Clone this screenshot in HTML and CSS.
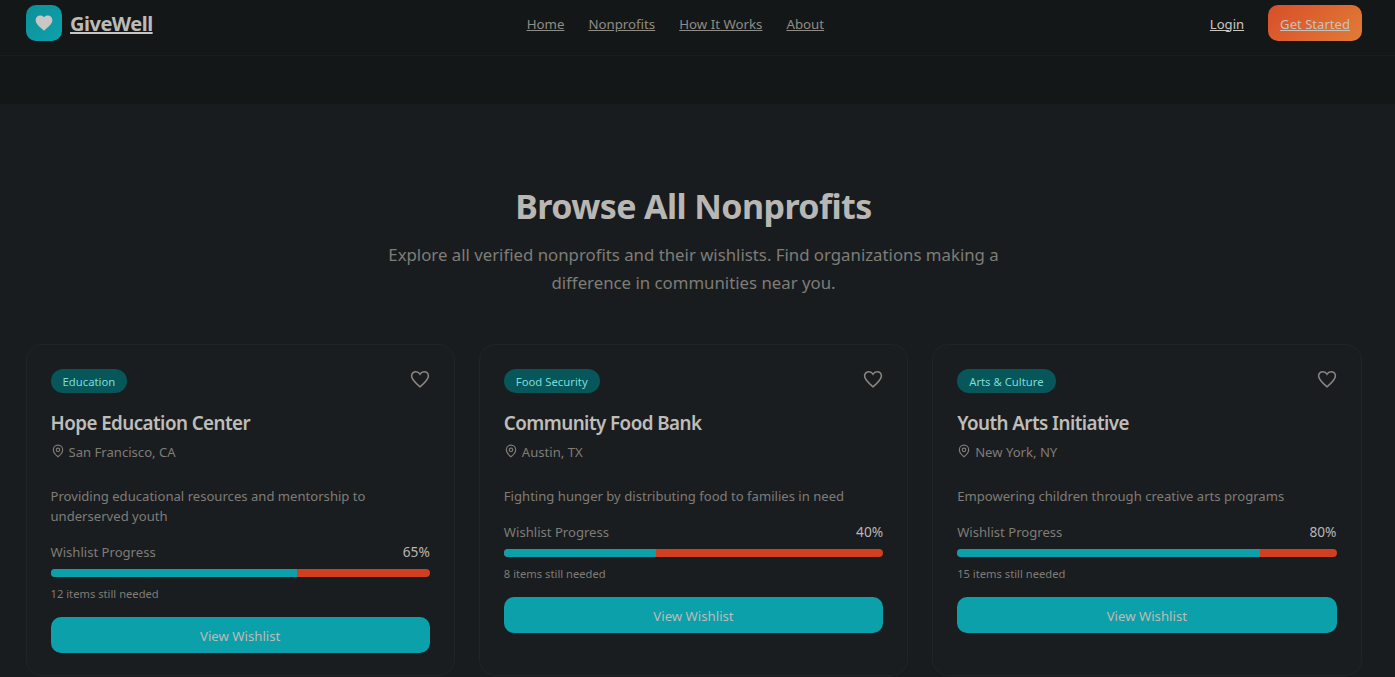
FILE: index.html
```html
<!DOCTYPE html>
<html lang="en">
<head>
<meta charset="utf-8">
<title>GiveWell</title>
<link rel="stylesheet" href="styles.css">
</head>
<body>
<header class="header">
  <a class="brand" href="#">
    <span class="logo"><svg viewBox="0 0 24 24" width="20" height="20"><path fill="#c9c7c3" d="M12 21.4C5.6 15.9 2 12.6 2 8.5 2 5.4 4.4 3 7.5 3c1.8 0 3.4.8 4.5 2.2C13.100 3.800 14.700 3 16.500 3 19.600 3 22 5.400 22 8.500c0 4.100-3.600 7.400-10 12.900z"/></svg></span>
    <span class="brand-name">GiveWell</span>
  </a>
  <nav class="nav">
    <a href="#">Home</a>
    <a href="#">Nonprofits</a>
    <a href="#">How It Works</a>
    <a href="#">About</a>
  </nav>
  <div class="actions">
    <a class="login" href="#">Login</a>
    <a class="cta" href="#">Get Started</a>
  </div>
</header>
<div class="strip"></div>
<main class="main">
  <section class="intro">
    <h1>Browse All Nonprofits</h1>
    <p>Explore all verified nonprofits and their wishlists. Find organizations making a difference in communities near you.</p>
  </section>
  <section class="grid">
    <article class="card">
      <div class="card-top">
        <span class="badge">Education</span>
        <svg class="fav" viewBox="0 0 24 24" width="22" height="22"><path d="M12 20.500C5.800 15.200 2.800 12.300 2.800 8.700 2.800 6 4.900 4 7.500 4c1.800 0 3.500 1 4.500 2.700C13 5 14.700 4 16.500 4c2.600 0 4.700 2 4.700 4.700 0 3.600-3 6.500-9.200 11.800z"/></svg>
      </div>
      <h2>Hope Education Center</h2>
      <div class="loc"><svg viewBox="0 0 24 24" width="14" height="14"><path d="M20 10c0 6-8 12-8 12s-8-6-8-12a8 8 0 0 1 16 0z"/><circle cx="12" cy="10" r="3"/></svg><span>San Francisco, CA</span></div>
      <p class="desc">Providing educational resources and mentorship to underserved youth</p>
      <div class="prog-head"><span>Wishlist Progress</span><span class="pct">65%</span></div>
      <div class="bar"><div class="fill" style="width:65%"></div></div>
      <div class="needed">12 items still needed</div>
      <a class="btn" href="#">View Wishlist</a>
    </article>
    <article class="card">
      <div class="card-top">
        <span class="badge">Food Security</span>
        <svg class="fav" viewBox="0 0 24 24" width="22" height="22"><path d="M12 20.500C5.800 15.200 2.800 12.300 2.800 8.700 2.800 6 4.900 4 7.500 4c1.800 0 3.500 1 4.500 2.700C13 5 14.700 4 16.500 4c2.600 0 4.700 2 4.700 4.700 0 3.600-3 6.500-9.200 11.800z"/></svg>
      </div>
      <h2>Community Food Bank</h2>
      <div class="loc"><svg viewBox="0 0 24 24" width="14" height="14"><path d="M20 10c0 6-8 12-8 12s-8-6-8-12a8 8 0 0 1 16 0z"/><circle cx="12" cy="10" r="3"/></svg><span>Austin, TX</span></div>
      <p class="desc">Fighting hunger by distributing food to families in need</p>
      <div class="prog-head"><span>Wishlist Progress</span><span class="pct">40%</span></div>
      <div class="bar"><div class="fill" style="width:40%"></div></div>
      <div class="needed">8 items still needed</div>
      <a class="btn" href="#">View Wishlist</a>
    </article>
    <article class="card">
      <div class="card-top">
        <span class="badge">Arts &amp; Culture</span>
        <svg class="fav" viewBox="0 0 24 24" width="22" height="22"><path d="M12 20.500C5.800 15.200 2.800 12.300 2.800 8.700 2.800 6 4.900 4 7.500 4c1.800 0 3.500 1 4.500 2.700C13 5 14.700 4 16.500 4c2.600 0 4.700 2 4.700 4.700 0 3.600-3 6.500-9.200 11.800z"/></svg>
      </div>
      <h2>Youth Arts Initiative</h2>
      <div class="loc"><svg viewBox="0 0 24 24" width="14" height="14"><path d="M20 10c0 6-8 12-8 12s-8-6-8-12a8 8 0 0 1 16 0z"/><circle cx="12" cy="10" r="3"/></svg><span>New York, NY</span></div>
      <p class="desc">Empowering children through creative arts programs</p>
      <div class="prog-head"><span>Wishlist Progress</span><span class="pct">80%</span></div>
      <div class="bar"><div class="fill" style="width:79.8%"></div></div>
      <div class="needed">15 items still needed</div>
      <a class="btn" href="#">View Wishlist</a>
    </article>
  </section>
</main>
</body>
</html>
```
FILE: styles.css
```css
* { box-sizing: border-box; }
html, body { margin: 0; height: 677px; overflow: hidden; }
body {
  background: #181c1f;
  color: #c9c7c3;
  font-family: "Noto Sans", "Open Sans", sans-serif;
}
a { color: inherit; }

.header {
  height: 56px;
  padding: 5px 33px 0 26px;
  display: flex;
  align-items: flex-start;
  background: #141718;
  border-bottom: 1px solid #191d1e;
}
.brand { display: flex; align-items: center; gap: 8px; width: max-content; }
.logo {
  width: 36px; height: 36px;
  border-radius: 10px;
  background: linear-gradient(135deg, #0d8f99, #0da2ac);
  display: flex; align-items: center; justify-content: center;
}
.brand-name { font-size: 20px; font-weight: 700; color: #bdbbb7; letter-spacing: -0.5px; }
.nav { display: flex; gap: 24px; font-size: 13.27px; color: #8f8c85; height: 36px; padding-top: 1px; align-items: center; margin-left: 374px; }
.actions { display: flex; align-items: center; gap: 24px; font-size: 13.1px; height: 36px; margin-left: auto; }
.login { color: #c9c7c3; padding-top: 1px; }
.cta {
  height: 36px; padding: 1px 12px 0;
  display: flex; align-items: center;
  border-radius: 10px;
  color: #c9c2ba;
  background: linear-gradient(135deg, #d84e2a, #e17c36);
}

.strip { height: 48px; background: #141718; }

.main { padding: 80px 33.5px 0 25.5px; }
.intro { text-align: center; margin-bottom: 47px; }
.intro h1 { margin: 0 0 13px; font-size: 34px; line-height: 44px; font-weight: 700; color: #b9b7b3; letter-spacing: -0.6px; }
.intro p { margin: 0 auto; width: 672px; font-size: 16.8px; line-height: 28px; color: #7f7c76; }

.grid { display: grid; grid-template-columns: repeat(3, 1fr); gap: 24px; }
.card {
  height: 332px;
  padding: 24px 24px 22px;
  border: 1px solid #1f2428;
  border-radius: 16px;
  background: #1a1d20;
  display: flex; flex-direction: column;
}
.card-top { display: flex; justify-content: space-between; align-items: flex-start; margin-bottom: 16px; }
.badge {
  height: 24px; padding: 0 12px;
  display: flex; align-items: center;
  border-radius: 12px;
  background: #06565a;
  color: #7cdcd8;
  font-size: 11.3px;
}
.fav { fill: none; stroke: #8a867f; stroke-width: 1.700; margin: -1px -1px 0 0; }
.card h2 { margin: 0 0 5px; font-size: 18.8px; line-height: 28px; font-weight: 600; color: #bfbdb9; letter-spacing: -0.55px; }
.loc { display: flex; align-items: center; gap: 4px; font-size: 13.1px; line-height: 20px; color: #7f7c76; margin-bottom: 24px; }
.loc svg { fill: none; stroke: #7f7c76; stroke-width: 2; margin-top: -3px; }
.desc { margin: 0 0 16px; font-size: 13.1px; line-height: 20px; color: #7f7c76; }
.prog-head { display: flex; justify-content: space-between; font-size: 13.1px; line-height: 20px; color: #7f7c76; margin-bottom: 7px; }
.pct { color: #b9b7b3; font-size: 13.7px; }
.bar { height: 8px; border-radius: 4px; background: #d03f1e; overflow: hidden; margin-bottom: 9px; }
.fill { height: 100%; background: #0ca0aa; }
.needed { font-size: 11.2px; line-height: 16px; color: #7f7c76; margin-bottom: 15px; }
.btn {
  height: 36px;
  flex: none;
  padding-top: 1px;
  display: flex; align-items: center; justify-content: center;
  border-radius: 10px;
  background: #0ca0aa;
  color: #bdbbb7;
  font-size: 13.2px;
  text-decoration: none;
}
```
